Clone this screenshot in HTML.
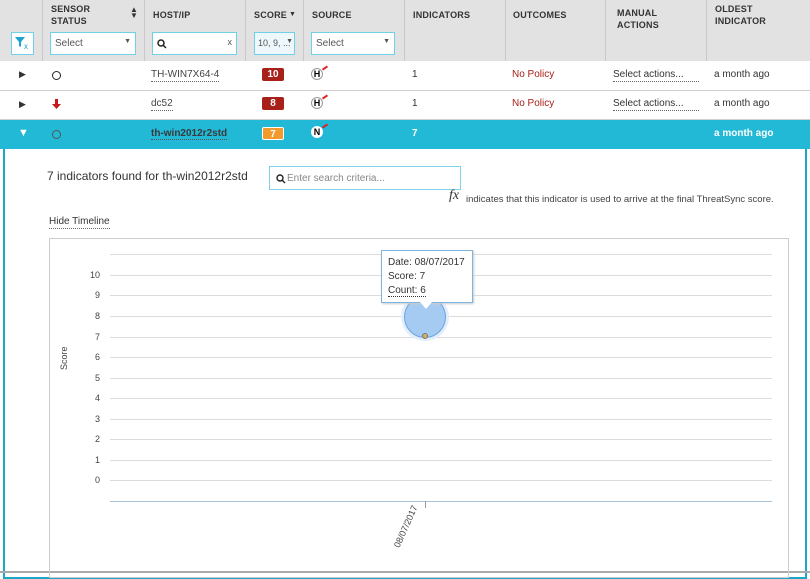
<!DOCTYPE html>
<html><head><style>
*{box-sizing:border-box;margin:0;padding:0}
body{width:810px;height:573px;background:#fff;font-family:"Liberation Sans",sans-serif;font-size:10px;color:#333;position:relative;overflow:hidden}
.a{position:absolute}
.hdr{left:0;top:0;width:810px;height:61px;background:#e2e2e2}
.vl{position:absolute;top:0;height:61px;width:1px;background:#c8c8c8}
.ht{position:absolute;font-weight:bold;font-size:9px;color:#333;line-height:12px;letter-spacing:.2px}
.sel{position:absolute;top:32px;height:23px;background:#fff;border:1px solid #6fd0e8;font-size:10px;color:#555;padding:5px 0 0 4px}
.sel .c{position:absolute;right:4px;top:5px;font-size:7px}
.row{position:absolute;left:0;width:810px;border-bottom:1px solid #cfcfcf}
.t{position:absolute;font-size:10px}
.badge{position:absolute;width:22px;height:13px;border-radius:2px;color:#fff;font-weight:bold;font-size:10px;text-align:center;line-height:13px}
.ul{border-bottom:1px dotted #666;padding-bottom:1px}
.grid{position:absolute;left:110px;width:662px;height:1px;background:#dcdcdc}
.yl{position:absolute;left:88px;font-size:9px;color:#444;width:12px;text-align:right}
</style></head><body>
<div class="a hdr"></div>
<div class="vl" style="left:42px"></div><div class="vl" style="left:144px"></div><div class="vl" style="left:245px"></div><div class="vl" style="left:303px"></div><div class="vl" style="left:404px"></div><div class="vl" style="left:505px"></div><div class="vl" style="left:605px"></div><div class="vl" style="left:706px"></div>
<div class="ht" style="left:51px;top:3px">SENSOR<br>STATUS</div>
<div class="a" style="left:130px;top:7px;font-size:8px;line-height:6px">▲<br>▼</div>
<div class="ht" style="left:153px;top:9px">HOST/IP</div>
<div class="ht" style="left:254px;top:9px">SCORE</div><div class="a" style="left:289px;top:11px;font-size:7px">▼</div>
<div class="ht" style="left:312px;top:9px">SOURCE</div>
<div class="ht" style="left:413px;top:9px">INDICATORS</div>
<div class="ht" style="left:513px;top:9px">OUTCOMES</div>
<div class="ht" style="left:617px;top:7px">MANUAL<br>ACTIONS</div>
<div class="ht" style="left:715px;top:3px">OLDEST<br>INDICATOR</div>
<div class="sel" style="left:11px;width:23px;"><svg width="16" height="14" style="position:absolute;left:2px;top:3px"><path d="M1 1h10l-4 5v5l-2-1V6z" fill="#1ea4cf"/><text x="10" y="13" font-size="8" fill="#1ea4cf" font-family="Liberation Sans">x</text></svg></div>
<div class="sel" style="left:50px;width:86px">Select<span class="c">▼</span></div>
<div class="sel" style="left:152px;width:85px"><svg width="10" height="10" style="position:absolute;left:4px;top:6px"><circle cx="4" cy="4" r="3" stroke="#222" stroke-width="1.5" fill="none"/><path d="M6 6l3 3" stroke="#222" stroke-width="1.5"/></svg><span class="c" style="font-size:9px;top:4px">x</span></div>
<div class="sel" style="left:254px;width:41px;background:#eef8fc;font-size:9px;padding-left:3px">10, 9, ...<span class="c" style="right:1px">▼</span></div>
<div class="sel" style="left:311px;width:84px">Select<span class="c">▼</span></div>

<div class="row" style="top:61px;height:30px"></div>
<div class="row" style="top:91px;height:29px"></div>
<div class="row" style="top:120px;height:29px;background:#22b9d6;border:none"></div>

<div class="t" style="left:19px;top:69px;font-size:9px;color:#333">▶</div>
<div class="a" style="left:52px;top:71px;width:9px;height:9px;border:1.5px solid #222;border-radius:50%"></div>
<div class="t ul" style="left:151px;top:69px;color:#444">TH-WIN7X64-4</div>
<div class="badge" style="left:262px;top:68px;background:#a8201a">10</div>
<div class="a" style="left:311px;top:68px;width:12px;height:12px;border-radius:50%;border:1px solid #999;font-weight:bold;font-size:9px;text-align:center;line-height:11px;color:#000">H</div><div class="a" style="left:322px;top:67px;width:6px;height:2px;background:#d22;transform:rotate(-35deg)"></div>
<div class="t" style="left:412px;top:69px">1</div>
<div class="t" style="left:512px;top:69px;color:#a8201a">No Policy</div>
<div class="t ul" style="left:613px;top:69px;width:86px">Select actions...</div>
<div class="t" style="left:714px;top:69px">a month ago</div>

<div class="t" style="left:19px;top:99px;font-size:9px">▶</div>
<svg class="a" style="left:52px;top:99px" width="9" height="11"><path d="M3 0h3v5h3L4.5 10 0 5h3z" fill="#c41a1a"/></svg>
<div class="t ul" style="left:151px;top:98px;color:#444">dc52</div>
<div class="badge" style="left:262px;top:97px;background:#a8201a">8</div>
<div class="a" style="left:311px;top:97px;width:12px;height:12px;border-radius:50%;border:1px solid #999;font-weight:bold;font-size:9px;text-align:center;line-height:11px;color:#000">H</div><div class="a" style="left:322px;top:96px;width:6px;height:2px;background:#d22;transform:rotate(-35deg)"></div>
<div class="t" style="left:412px;top:98px">1</div>
<div class="t" style="left:512px;top:98px;color:#a8201a">No Policy</div>
<div class="t ul" style="left:613px;top:98px;width:86px">Select actions...</div>
<div class="t" style="left:714px;top:98px">a month ago</div>

<div class="t" style="left:18px;top:127px;color:#fff;font-size:11px">▼</div>
<div class="a" style="left:52px;top:130px;width:9px;height:9px;border:1px solid #555;border-radius:50%"></div>
<div class="t" style="left:151px;top:128px;font-weight:bold;color:#3a3a3a;border-bottom:1px dotted #555">th-win2012r2std</div>
<div class="badge" style="left:262px;top:127px;background:#f39a2c;border:1px solid #fff">7</div>
<div class="a" style="left:311px;top:126px;width:12px;height:12px;border-radius:50%;background:#fff;font-weight:bold;font-size:9px;text-align:center;line-height:12px;color:#000">N</div><div class="a" style="left:322px;top:125px;width:6px;height:2px;background:#d22;transform:rotate(-35deg)"></div>
<div class="t" style="left:412px;top:128px;color:#fff;font-weight:bold">7</div>
<div class="t" style="left:714px;top:128px;color:#fff;font-weight:bold">a month ago</div>

<div class="a" style="left:3px;top:149px;width:804px;height:430px;border:2px solid #1ba7c6;border-top:none"></div>
<div class="a" style="left:0;top:571px;width:810px;height:2px;background:#aaa"></div>

<div class="t" style="left:47px;top:169px;font-size:12px;color:#333">7 indicators found for th-win2012r2std</div>
<div class="a" style="left:269px;top:166px;width:192px;height:24px;border:1px solid #7fd3ea"><svg width="10" height="10" style="position:absolute;left:6px;top:7px"><circle cx="4" cy="4" r="3" stroke="#222" stroke-width="1.4" fill="none"/><path d="M6 6l3 3" stroke="#222" stroke-width="1.4"/></svg><span style="position:absolute;left:17px;top:6px;font-size:10px;color:#888">Enter search criteria...</span></div>
<div class="a" style="left:449px;top:188px;font-family:'Liberation Serif',serif;font-style:italic;font-size:14px">fx</div>
<div class="t" style="left:466px;top:194px;font-size:9.5px;color:#444">indicates that this indicator is used to arrive at the final ThreatSync score.</div>
<div class="t ul" style="left:49px;top:216px;font-size:10px;color:#333">Hide Timeline</div>

<div class="a" style="left:49px;top:238px;width:740px;height:340px;border:1px solid #ccc"></div>
<div class="grid" style="top:254px"></div>
<div class="grid" style="top:275px"></div><div class="yl" style="top:270px">10</div>
<div class="grid" style="top:295px"></div><div class="yl" style="top:290px">9</div>
<div class="grid" style="top:316px"></div><div class="yl" style="top:311px">8</div>
<div class="grid" style="top:337px"></div><div class="yl" style="top:332px">7</div>
<div class="grid" style="top:357px"></div><div class="yl" style="top:352px">6</div>
<div class="grid" style="top:378px"></div><div class="yl" style="top:373px">5</div>
<div class="grid" style="top:398px"></div><div class="yl" style="top:393px">4</div>
<div class="grid" style="top:419px"></div><div class="yl" style="top:414px">3</div>
<div class="grid" style="top:439px"></div><div class="yl" style="top:434px">2</div>
<div class="grid" style="top:460px"></div><div class="yl" style="top:455px">1</div>
<div class="grid" style="top:480px"></div><div class="yl" style="top:475px">0</div>
<div class="grid" style="top:501px;background:#a8c4dc"></div>
<div class="a" style="left:425px;top:501px;width:1px;height:7px;background:#999"></div>
<div class="a" style="left:59px;top:370px;font-size:9px;color:#444;transform:rotate(-90deg);transform-origin:left top">Score</div>
<div class="a" style="left:392px;top:545px;font-size:9px;color:#444;transform:rotate(-66deg);transform-origin:left top;white-space:nowrap">08/07/2017</div>

<div class="a" style="left:404px;top:296px;width:42px;height:42px;border-radius:50%;background:#a5cbf2;border:1px solid #6aa3e0;box-shadow:0 0 0 3px #e4eefa"></div>
<div class="a" style="left:422px;top:333px;width:6px;height:6px;border-radius:50%;background:#d4b05a;border:1px solid #777"></div>
<div class="a" style="left:381px;top:250px;width:92px;height:53px;background:#fff;border:1px solid #7eb4e0;box-shadow:1px 1px 2px #ccc"></div>
<div class="a" style="left:420px;top:302px;width:0;height:0;border-left:6px solid transparent;border-right:6px solid transparent;border-top:7px solid #fff"></div>
<div class="a" style="left:388px;top:256px;font-size:10px;line-height:14px;color:#333">Date: 08/07/2017<br>Score: 7<br><span style="border-bottom:1px dotted #333">Count: 6</span></div>
</body></html>
